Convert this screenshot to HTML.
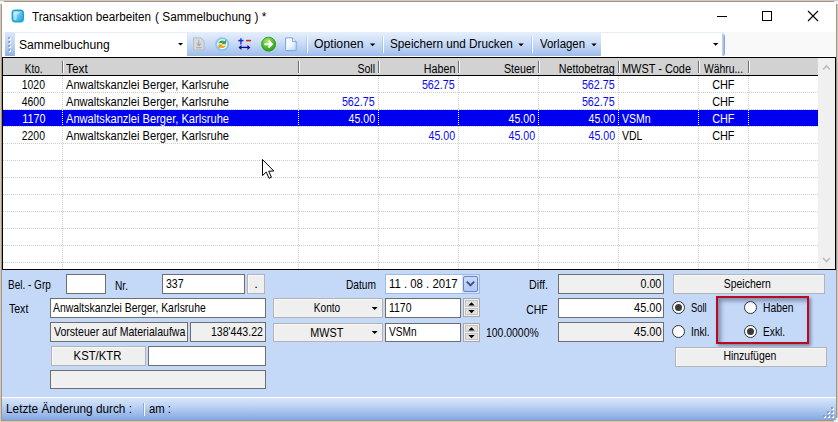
<!DOCTYPE html>
<html><head><meta charset="utf-8"><title>Transaktion bearbeiten</title>
<style>
html,body{margin:0;padding:0;}
body{width:838px;height:422px;position:relative;overflow:hidden;background:#fff;font-family:"Liberation Sans",sans-serif;}
.t{position:absolute;white-space:pre;display:block;}
</style></head><body>
<div style="position:absolute;left:0px;top:0px;width:838px;height:422px;background:#cbc7d4;"></div>
<div style="position:absolute;left:1px;top:1px;width:836px;height:420px;background:#a9976a;"></div>
<div style="position:absolute;left:2px;top:2px;width:834px;height:418px;background:#fff;"></div>
<div style="position:absolute;left:0px;top:1px;width:4px;height:3px;background:#fff;opacity:.8"></div>
<div style="position:absolute;left:834px;top:1px;width:4px;height:3px;background:#fff;opacity:.8"></div>
<div style="position:absolute;left:834px;top:418px;width:4px;height:4px;background:#fff;opacity:.8"></div>
<svg style="position:absolute;left:11px;top:9px" width="14" height="15" viewBox="0 0 14 15">
<defs><linearGradient id="ig" x1="0" y1="0" x2="1" y2="1"><stop offset="0" stop-color="#bfe8f6"/><stop offset=".45" stop-color="#6cc6ea"/><stop offset="1" stop-color="#1fa6dc"/></linearGradient></defs>
<rect x=".6" y=".6" width="12.4" height="12.8" rx="3.6" fill="#1aa2d4"/>
<rect x="2" y="2" width="9.6" height="10" rx="2.2" fill="url(#ig)"/>
<path d="M3 3 L9.5 3 L6 6 L5.4 11 L3 11 Z" fill="#fff" opacity=".45"/>
</svg>
<span class="t" style="left:32.00px;top:9.74px;font-size:12px;line-height:15px;color:#000;transform:scaleX(0.9727);transform-origin:0 0;">Transaktion bearbeiten </span>
<span class="t" style="left:155.20px;top:9.74px;font-size:12px;line-height:15px;color:#000;transform:scaleX(0.9874);transform-origin:0 0;">( Sammelbuchung ) *</span>
<svg style="position:absolute;left:700px;top:2px" width="134" height="30" viewBox="0 0 134 30" shape-rendering="crispEdges">
<rect x="17" y="14" width="10" height="1" fill="#000"/>
<rect x="62.5" y="9.5" width="9" height="9" fill="none" stroke="#000" stroke-width="1"/>
<g shape-rendering="auto" stroke="#000" stroke-width="1.1"><path d="M108 9 L118 19 M118 9 L108 19"/></g>
</svg>
<div style="position:absolute;left:2px;top:32px;width:834px;height:24px;background:#f9f9f9;"></div>
<div style="position:absolute;left:5px;top:32px;width:720px;height:24px;background:linear-gradient(#e6effc 0%,#d2e1f8 35%,#b8cff3 70%,#9cbbea 100%);border-radius:0 3px 3px 0;"></div>
<div style="position:absolute;left:5px;top:32px;width:10px;height:24px;background:linear-gradient(#dbe8fb,#b9cff2 60%,#8fb0e4);border-radius:0 0 0 3px;"></div>
<div style="position:absolute;left:9px;top:38px;width:2px;height:2px;background:#fff;"></div>
<div style="position:absolute;left:8px;top:37px;width:2px;height:2px;background:#9aa4c4;"></div>
<div style="position:absolute;left:9px;top:42px;width:2px;height:2px;background:#fff;"></div>
<div style="position:absolute;left:8px;top:41px;width:2px;height:2px;background:#9aa4c4;"></div>
<div style="position:absolute;left:9px;top:46px;width:2px;height:2px;background:#fff;"></div>
<div style="position:absolute;left:8px;top:45px;width:2px;height:2px;background:#9aa4c4;"></div>
<div style="position:absolute;left:9px;top:50px;width:2px;height:2px;background:#fff;"></div>
<div style="position:absolute;left:8px;top:49px;width:2px;height:2px;background:#9aa4c4;"></div>
<div style="position:absolute;left:15px;top:33px;width:172px;height:23px;background:#fff;"></div>
<span class="t" style="left:18.80px;top:37.94px;font-size:12px;line-height:15px;color:#000;transform:scaleX(1.0072);transform-origin:0 0;">Sammelbuchung</span>
<svg style="position:absolute;left:177px;top:42px" width="9" height="6"><polygon points="1.00,1.00 6.00,1.00 3.50,3.50" fill="#000"/></svg>
<svg style="position:absolute;left:190px;top:34px" width="112" height="20" viewBox="190 34 112 20">
<defs>
<radialGradient id="gg" cx=".42" cy=".28" r=".8"><stop offset="0" stop-color="#a8ea72"/><stop offset=".55" stop-color="#4fbb2c"/><stop offset="1" stop-color="#2a9417"/></radialGradient>
<linearGradient id="pg" x1="0" y1="0" x2=".7" y2="1"><stop offset="0" stop-color="#ffffff"/><stop offset=".55" stop-color="#f4f9ff"/><stop offset="1" stop-color="#c4dcf8"/></linearGradient>
</defs>
<!-- disabled save -->
<path d="M193.5 37.9 h7.6 l3 3 v9 h-10.6 z" fill="#d6d8dc" stroke="#b9bcc3" stroke-width="1"/>
<path d="M198.8 40.4 v4.6 M196.6 43.6 l2.2 2.2 l2.2 -2.2 M196 47.8 h5.8" stroke="#a4a8b0" stroke-width="1.1" fill="none"/>
<!-- refresh -->
<circle cx="222.2" cy="44.2" r="6" fill="#fbfdff" stroke="#86c6f0" stroke-width="2"/>
<path d="M218.8 43.2 a3.5 3 0 0 1 5.6 -1.6 l1.2 -1.1 v3.3 h-3.4 l1.1 -1.1" fill="#35a035" stroke="#35a035" stroke-width=".9"/>
<path d="M225.6 45.4 a3.5 3 0 0 1 -5.6 1.6 l-1.2 1.1 v-3.3 h3.4 l-1.1 1.1" fill="#eaa516" stroke="#eaa516" stroke-width=".9"/>
<!-- plus minus arrows -->
<path d="M238.3 40.6 h5.2" stroke="#1428d0" stroke-width="1.5"/>
<path d="M240.9 38.2 v6.4" stroke="#1428d0" stroke-width="1.3"/>
<path d="M246 40.6 h5" stroke="#e31c1c" stroke-width="1.5"/>
<path d="M240 47.4 h9" stroke="#0c0c8c" stroke-width="1.3"/>
<path d="M241.4 44.9 l-3 2.5 l3 2.5 z M247.4 44.9 l3 2.5 l-3 2.5 z" fill="#0c0c8c"/>
<!-- green go -->
<circle cx="268.6" cy="44.2" r="7" fill="url(#gg)" stroke="#2f9a1c" stroke-width=".9"/>
<path d="M264.4 44.2 h6.6 M268.4 40.8 l3.4 3.4 l-3.4 3.4" stroke="#fff" stroke-width="2.1" fill="none" stroke-linejoin="miter"/>
<!-- page -->
<path d="M285.6 37.9 h6.8 l3.8 3.8 v8.8 h-10.6 z" fill="url(#pg)" stroke="#78a8e2" stroke-width="1"/>
<path d="M292.4 37.9 v3.8 h3.8" fill="#e2eefc" stroke="#78a8e2" stroke-width="1"/>
<path d="M297 42.5 v8.6 h-10.6" stroke="#9dbbe6" stroke-width=".8" fill="none" opacity=".7"/>
</svg>
<div style="position:absolute;left:306px;top:36px;width:1px;height:17px;background:rgba(120,150,205,.28);"></div>
<div style="position:absolute;left:307px;top:36px;width:1px;height:17px;background:#fbfdff;"></div>
<span class="t" style="left:314.00px;top:37.14px;font-size:12px;line-height:15px;color:#000;transform:scaleX(1.0164);transform-origin:0 0;">Optionen</span>
<svg style="position:absolute;left:368px;top:42px" width="9" height="6"><polygon points="1.90,1.50 7.30,1.50 4.60,4.20" fill="#000"/></svg>
<div style="position:absolute;left:382px;top:36px;width:1px;height:17px;background:rgba(120,150,205,.28);"></div>
<div style="position:absolute;left:383px;top:36px;width:1px;height:17px;background:#fbfdff;"></div>
<span class="t" style="left:389.80px;top:37.14px;font-size:12px;line-height:15px;color:#000;transform:scaleX(0.9792);transform-origin:0 0;">Speichern und Drucken</span>
<svg style="position:absolute;left:517px;top:42px" width="9" height="6"><polygon points="1.30,1.50 6.70,1.50 4.00,4.20" fill="#000"/></svg>
<div style="position:absolute;left:531px;top:36px;width:1px;height:17px;background:rgba(120,150,205,.28);"></div>
<div style="position:absolute;left:532px;top:36px;width:1px;height:17px;background:#fbfdff;"></div>
<span class="t" style="left:539.60px;top:37.14px;font-size:12px;line-height:15px;color:#000;transform:scaleX(0.9499);transform-origin:0 0;">Vorlagen</span>
<svg style="position:absolute;left:590px;top:42px" width="9" height="6"><polygon points="1.30,1.50 6.70,1.50 4.00,4.20" fill="#000"/></svg>
<div style="position:absolute;left:601px;top:33px;width:121px;height:23px;background:#fff;"></div>
<svg style="position:absolute;left:712px;top:42px" width="9" height="6"><polygon points="1.00,1.00 6.40,1.00 3.70,3.70" fill="#000"/></svg>
<div style="position:absolute;left:722px;top:34px;width:3px;height:22px;background:linear-gradient(90deg,#c6d8f6,#9db9ea 60%,#7f9fd6);border-radius:0 3px 3px 0;"></div>
<div style="position:absolute;left:2px;top:57px;width:834px;height:213px;background:#000;"></div>
<div style="position:absolute;left:3px;top:58px;width:815px;height:17px;background:#d2d2d2;"></div>
<div style="position:absolute;left:3px;top:76px;width:815px;height:193px;background:#fff;"></div>
<div style="position:absolute;left:818px;top:58px;width:17px;height:211px;background:#f0f0f0;"></div>
<svg style="position:absolute;left:818px;top:58px" width="17" height="210" viewBox="0 0 17 210">
<path d="M5 11.5 L8.5 8 L12 11.5" stroke="#bdbdbd" stroke-width="1.6" fill="none"/>
<path d="M5 200 L8.5 203.5 L12 200" stroke="#bdbdbd" stroke-width="1.6" fill="none"/>
</svg>
<div style="position:absolute;left:3px;top:92px;width:815px;height:1px;background-image:linear-gradient(90deg,#cccccc 50%,transparent 50%);background-size:2px 1px;"></div>
<div style="position:absolute;left:3px;top:109px;width:815px;height:1px;background-image:linear-gradient(90deg,#cccccc 50%,transparent 50%);background-size:2px 1px;"></div>
<div style="position:absolute;left:3px;top:126px;width:815px;height:1px;background-image:linear-gradient(90deg,#cccccc 50%,transparent 50%);background-size:2px 1px;"></div>
<div style="position:absolute;left:3px;top:143px;width:815px;height:1px;background-image:linear-gradient(90deg,#cccccc 50%,transparent 50%);background-size:2px 1px;"></div>
<div style="position:absolute;left:3px;top:160px;width:815px;height:1px;background-image:linear-gradient(90deg,#cccccc 50%,transparent 50%);background-size:2px 1px;"></div>
<div style="position:absolute;left:3px;top:177px;width:815px;height:1px;background-image:linear-gradient(90deg,#cccccc 50%,transparent 50%);background-size:2px 1px;"></div>
<div style="position:absolute;left:3px;top:194px;width:815px;height:1px;background-image:linear-gradient(90deg,#cccccc 50%,transparent 50%);background-size:2px 1px;"></div>
<div style="position:absolute;left:3px;top:211px;width:815px;height:1px;background-image:linear-gradient(90deg,#cccccc 50%,transparent 50%);background-size:2px 1px;"></div>
<div style="position:absolute;left:3px;top:228px;width:815px;height:1px;background-image:linear-gradient(90deg,#cccccc 50%,transparent 50%);background-size:2px 1px;"></div>
<div style="position:absolute;left:3px;top:245px;width:815px;height:1px;background-image:linear-gradient(90deg,#cccccc 50%,transparent 50%);background-size:2px 1px;"></div>
<div style="position:absolute;left:3px;top:262px;width:815px;height:1px;background-image:linear-gradient(90deg,#cccccc 50%,transparent 50%);background-size:2px 1px;"></div>
<div style="position:absolute;left:62px;top:76px;width:1px;height:193px;background-image:linear-gradient(#cccccc 50%,transparent 50%);background-size:1px 2px;"></div>
<div style="position:absolute;left:62px;top:61px;width:1px;height:12px;background:#6e6e6e;"></div>
<div style="position:absolute;left:63px;top:61px;width:1px;height:12px;background:#fafafa;"></div>
<div style="position:absolute;left:298px;top:76px;width:1px;height:193px;background-image:linear-gradient(#cccccc 50%,transparent 50%);background-size:1px 2px;"></div>
<div style="position:absolute;left:298px;top:61px;width:1px;height:12px;background:#6e6e6e;"></div>
<div style="position:absolute;left:299px;top:61px;width:1px;height:12px;background:#fafafa;"></div>
<div style="position:absolute;left:378px;top:76px;width:1px;height:193px;background-image:linear-gradient(#cccccc 50%,transparent 50%);background-size:1px 2px;"></div>
<div style="position:absolute;left:378px;top:61px;width:1px;height:12px;background:#6e6e6e;"></div>
<div style="position:absolute;left:379px;top:61px;width:1px;height:12px;background:#fafafa;"></div>
<div style="position:absolute;left:458px;top:76px;width:1px;height:193px;background-image:linear-gradient(#cccccc 50%,transparent 50%);background-size:1px 2px;"></div>
<div style="position:absolute;left:458px;top:61px;width:1px;height:12px;background:#6e6e6e;"></div>
<div style="position:absolute;left:459px;top:61px;width:1px;height:12px;background:#fafafa;"></div>
<div style="position:absolute;left:538px;top:76px;width:1px;height:193px;background-image:linear-gradient(#cccccc 50%,transparent 50%);background-size:1px 2px;"></div>
<div style="position:absolute;left:538px;top:61px;width:1px;height:12px;background:#6e6e6e;"></div>
<div style="position:absolute;left:539px;top:61px;width:1px;height:12px;background:#fafafa;"></div>
<div style="position:absolute;left:618px;top:76px;width:1px;height:193px;background-image:linear-gradient(#cccccc 50%,transparent 50%);background-size:1px 2px;"></div>
<div style="position:absolute;left:618px;top:61px;width:1px;height:12px;background:#6e6e6e;"></div>
<div style="position:absolute;left:619px;top:61px;width:1px;height:12px;background:#fafafa;"></div>
<div style="position:absolute;left:698px;top:76px;width:1px;height:193px;background-image:linear-gradient(#cccccc 50%,transparent 50%);background-size:1px 2px;"></div>
<div style="position:absolute;left:698px;top:61px;width:1px;height:12px;background:#6e6e6e;"></div>
<div style="position:absolute;left:699px;top:61px;width:1px;height:12px;background:#fafafa;"></div>
<div style="position:absolute;left:748px;top:76px;width:1px;height:193px;background-image:linear-gradient(#cccccc 50%,transparent 50%);background-size:1px 2px;"></div>
<div style="position:absolute;left:748px;top:61px;width:1px;height:12px;background:#6e6e6e;"></div>
<div style="position:absolute;left:749px;top:61px;width:1px;height:12px;background:#fafafa;"></div>
<div style="position:absolute;left:3px;top:110px;width:815px;height:16px;background:#0000f0;"></div>
<div style="position:absolute;left:62px;top:110px;width:1px;height:16px;background-image:linear-gradient(#fff 50%,transparent 50%);background-size:1px 2px;"></div>
<div style="position:absolute;left:298px;top:110px;width:1px;height:16px;background-image:linear-gradient(#fff 50%,transparent 50%);background-size:1px 2px;"></div>
<div style="position:absolute;left:378px;top:110px;width:1px;height:16px;background-image:linear-gradient(#fff 50%,transparent 50%);background-size:1px 2px;"></div>
<div style="position:absolute;left:458px;top:110px;width:1px;height:16px;background-image:linear-gradient(#fff 50%,transparent 50%);background-size:1px 2px;"></div>
<div style="position:absolute;left:538px;top:110px;width:1px;height:16px;background-image:linear-gradient(#fff 50%,transparent 50%);background-size:1px 2px;"></div>
<div style="position:absolute;left:618px;top:110px;width:1px;height:16px;background-image:linear-gradient(#fff 50%,transparent 50%);background-size:1px 2px;"></div>
<div style="position:absolute;left:698px;top:110px;width:1px;height:16px;background-image:linear-gradient(#fff 50%,transparent 50%);background-size:1px 2px;"></div>
<div style="position:absolute;left:748px;top:110px;width:1px;height:16px;background-image:linear-gradient(#fff 50%,transparent 50%);background-size:1px 2px;"></div>
<span class="t" style="left:22.83px;top:61.94px;font-size:12px;line-height:15px;color:#000;transform:scaleX(0.8245);transform-origin:50% 0;">Kto.</span>
<span class="t" style="left:66.10px;top:61.94px;font-size:12px;line-height:15px;color:#000;transform:scaleX(0.9906);transform-origin:0 0;">Text</span>
<span class="t" style="left:355.09px;top:61.94px;font-size:12px;line-height:15px;color:#000;transform:scaleX(0.8796);transform-origin:100% 0;">Soll</span>
<span class="t" style="left:419.64px;top:61.94px;font-size:12px;line-height:15px;color:#000;transform:scaleX(0.8909);transform-origin:100% 0;">Haben</span>
<span class="t" style="left:499.64px;top:61.94px;font-size:12px;line-height:15px;color:#000;transform:scaleX(0.8881);transform-origin:100% 0;">Steuer</span>
<span class="t" style="left:552.09px;top:61.94px;font-size:12px;line-height:15px;color:#000;transform:scaleX(0.8931);transform-origin:100% 0;">Nettobetrag</span>
<span class="t" style="left:622.00px;top:61.94px;font-size:12px;line-height:15px;color:#000;transform:scaleX(0.9104);transform-origin:0 0;">MWST - Code</span>
<span class="t" style="left:704.00px;top:61.94px;font-size:12px;line-height:15px;color:#000;transform:scaleX(0.8600);transform-origin:0 0;">Währu...</span>
<span class="t" style="left:20.15px;top:78.34px;font-size:12px;line-height:15px;color:#000;transform:scaleX(0.8691);transform-origin:50% 0;">1020</span>
<span class="t" style="left:66.00px;top:78.34px;font-size:12px;line-height:15px;color:#000;transform:scaleX(0.9257);transform-origin:0 0;">Anwaltskanzlei Berger, Karlsruhe</span>
<span class="t" style="left:418.30px;top:78.34px;font-size:12px;line-height:15px;color:#0808f0;transform:scaleX(0.8937);transform-origin:100% 0;">562.75</span>
<span class="t" style="left:578.10px;top:78.34px;font-size:12px;line-height:15px;color:#0808f0;transform:scaleX(0.8937);transform-origin:100% 0;">562.75</span>
<span class="t" style="left:710.87px;top:78.34px;font-size:12px;line-height:15px;color:#000;transform:scaleX(0.9083);transform-origin:50% 0;">CHF</span>
<span class="t" style="left:20.15px;top:95.34px;font-size:12px;line-height:15px;color:#000;transform:scaleX(0.8691);transform-origin:50% 0;">4600</span>
<span class="t" style="left:66.00px;top:95.34px;font-size:12px;line-height:15px;color:#000;transform:scaleX(0.9257);transform-origin:0 0;">Anwaltskanzlei Berger, Karlsruhe</span>
<span class="t" style="left:338.30px;top:95.34px;font-size:12px;line-height:15px;color:#0808f0;transform:scaleX(0.8937);transform-origin:100% 0;">562.75</span>
<span class="t" style="left:578.10px;top:95.34px;font-size:12px;line-height:15px;color:#0808f0;transform:scaleX(0.8937);transform-origin:100% 0;">562.75</span>
<span class="t" style="left:710.87px;top:95.34px;font-size:12px;line-height:15px;color:#000;transform:scaleX(0.9083);transform-origin:50% 0;">CHF</span>
<span class="t" style="left:20.60px;top:112.34px;font-size:12px;line-height:15px;color:#fff;transform:scaleX(0.8991);transform-origin:50% 0;">1170</span>
<span class="t" style="left:66.00px;top:112.34px;font-size:12px;line-height:15px;color:#fff;transform:scaleX(0.9257);transform-origin:0 0;">Anwaltskanzlei Berger, Karlsruhe</span>
<span class="t" style="left:344.97px;top:112.34px;font-size:12px;line-height:15px;color:#fff;transform:scaleX(0.8825);transform-origin:100% 0;">45.00</span>
<span class="t" style="left:504.97px;top:112.34px;font-size:12px;line-height:15px;color:#fff;transform:scaleX(0.8825);transform-origin:100% 0;">45.00</span>
<span class="t" style="left:584.77px;top:112.34px;font-size:12px;line-height:15px;color:#fff;transform:scaleX(0.8825);transform-origin:100% 0;">45.00</span>
<span class="t" style="left:622.20px;top:112.34px;font-size:12px;line-height:15px;color:#fff;transform:scaleX(0.8752);transform-origin:0 0;">VSMn</span>
<span class="t" style="left:710.87px;top:112.34px;font-size:12px;line-height:15px;color:#fff;transform:scaleX(0.9083);transform-origin:50% 0;">CHF</span>
<span class="t" style="left:20.15px;top:129.34px;font-size:12px;line-height:15px;color:#000;transform:scaleX(0.8691);transform-origin:50% 0;">2200</span>
<span class="t" style="left:66.00px;top:129.34px;font-size:12px;line-height:15px;color:#000;transform:scaleX(0.9257);transform-origin:0 0;">Anwaltskanzlei Berger, Karlsruhe</span>
<span class="t" style="left:424.97px;top:129.34px;font-size:12px;line-height:15px;color:#0808f0;transform:scaleX(0.8825);transform-origin:100% 0;">45.00</span>
<span class="t" style="left:504.97px;top:129.34px;font-size:12px;line-height:15px;color:#0808f0;transform:scaleX(0.8825);transform-origin:100% 0;">45.00</span>
<span class="t" style="left:584.77px;top:129.34px;font-size:12px;line-height:15px;color:#0808f0;transform:scaleX(0.8825);transform-origin:100% 0;">45.00</span>
<span class="t" style="left:622.20px;top:129.34px;font-size:12px;line-height:15px;color:#000;transform:scaleX(0.8739);transform-origin:0 0;">VDL</span>
<span class="t" style="left:710.87px;top:129.34px;font-size:12px;line-height:15px;color:#000;transform:scaleX(0.9083);transform-origin:50% 0;">CHF</span>
<svg style="position:absolute;left:261px;top:158px" width="15" height="23" viewBox="0 0 15 23">
<path d="M1.50 1.50 L1.50 17.62 L5.26 14.08 L8.06 20.31 L10.42 19.24 L7.73 13.22 L12.79 13.00 Z" fill="#fff" stroke="#000" stroke-width="1"/>
</svg>
<div style="position:absolute;left:2px;top:270px;width:834px;height:127px;background:#c4d8f8;"></div>
<span class="t" style="left:7.70px;top:277.40px;font-size:13px;line-height:16px;color:#000;transform:scaleX(0.7694);transform-origin:0 0;">Bel. - Grp</span>
<div style="position:absolute;left:66px;top:274px;width:40px;height:20px;background:#fff;border:1px solid #6e6e6e;box-sizing:border-box;"></div>
<span class="t" style="left:115.00px;top:277.50px;font-size:13px;line-height:16px;color:#000;transform:scaleX(0.7825);transform-origin:0 0;">Nr.</span>
<div style="position:absolute;left:162px;top:274px;width:83px;height:20px;background:#fff;border:1px solid #6e6e6e;box-sizing:border-box;"></div>
<span class="t" style="left:166.00px;top:276.40px;font-size:13px;line-height:16px;color:#000;transform:scaleX(0.8069);transform-origin:0 0;">337</span>
<div style="position:absolute;left:247px;top:274px;width:18px;height:20px;background:#efefef;border:1px solid #b4b4b4;box-sizing:border-box;box-shadow:inset 1px 1px 0 #f8f8f8;"></div>
<span class="t" style="left:254.19px;top:276.40px;font-size:13px;line-height:16px;color:#000;">.</span>
<span class="t" style="left:345.50px;top:277.40px;font-size:13px;line-height:16px;color:#000;transform:scaleX(0.7835);transform-origin:0 0;">Datum</span>
<div style="position:absolute;left:385px;top:274px;width:95px;height:20px;background:#fff;border:1px solid #9db9e6;box-sizing:border-box;"></div>
<span class="t" style="left:388.80px;top:276.40px;font-size:13px;line-height:16px;color:#000;transform:scaleX(0.8746);transform-origin:0 0;">11 . 08 . 2017</span>
<div style="position:absolute;left:462px;top:275px;width:17px;height:18px;background:#d3e1fa;"></div>
<div style="position:absolute;left:463px;top:276px;width:15px;height:16px;background:linear-gradient(#c9dbfb,#b3c9f5);border:1px solid #6485c6;box-sizing:border-box;border-radius:2px;"></div>
<svg style="position:absolute;left:463px;top:276px" width="16" height="16" viewBox="0 0 16 16"><path d="M3.8 5.6 L7.5 9.4 L11.2 5.6" stroke="#3c5288" stroke-width="2" fill="none"/></svg>
<span class="t" style="left:524.62px;top:277.40px;font-size:13px;line-height:16px;color:#000;transform:scaleX(0.8217);transform-origin:100% 0;">Diff.</span>
<div style="position:absolute;left:558px;top:274px;width:106px;height:20px;background:#f0f0f0;border:1px solid #6e6e6e;box-sizing:border-box;"></div>
<span class="t" style="left:636.00px;top:276.40px;font-size:13px;line-height:16px;color:#000;transform:scaleX(0.8221);transform-origin:100% 0;">0.00</span>
<div style="position:absolute;left:673px;top:274px;width:152px;height:20px;background:#efefef;border:1px solid #b4b4b4;box-sizing:border-box;box-shadow:inset 1px 1px 0 #f8f8f8;"></div>
<span class="t" style="left:718.33px;top:276.40px;font-size:13px;line-height:16px;color:#000;transform:scaleX(0.8029);transform-origin:50% 0;">Speichern</span>
<span class="t" style="left:9.20px;top:300.80px;font-size:13px;line-height:16px;color:#000;transform:scaleX(0.8095);transform-origin:0 0;">Text</span>
<div style="position:absolute;left:50px;top:298px;width:216px;height:20px;background:#fff;border:1px solid #6e6e6e;box-sizing:border-box;"></div>
<span class="t" style="left:53.30px;top:299.80px;font-size:13px;line-height:16px;color:#000;transform:scaleX(0.8005);transform-origin:0 0;">Anwaltskanzlei Berger, Karlsruhe</span>
<div style="position:absolute;left:273px;top:298px;width:110px;height:20px;background:#efefef;border:1px solid #b4b4b4;box-sizing:border-box;box-shadow:inset 1px 1px 0 #f8f8f8;"></div>
<span class="t" style="left:309.71px;top:299.80px;font-size:13px;line-height:16px;color:#000;transform:scaleX(0.7801);transform-origin:50% 0;">Konto</span>
<svg style="position:absolute;left:370px;top:306px" width="10" height="7"><polygon points="1.70,1.00 7.70,1.00 4.70,4.00" fill="#000"/></svg>
<div style="position:absolute;left:385px;top:298px;width:76px;height:20px;background:#fff;border:1px solid #6e6e6e;box-sizing:border-box;"></div>
<span class="t" style="left:388.80px;top:299.80px;font-size:13px;line-height:16px;color:#000;transform:scaleX(0.8049);transform-origin:0 0;">1170</span>
<div style="position:absolute;left:463px;top:298px;width:17px;height:19px;background:#f0f0f0;border:1px solid #a8a8a8;box-sizing:border-box;"></div>
<div style="position:absolute;left:465px;top:300px;width:13px;height:7px;background:#e1e1e1;border:1px solid #c4c4c4;box-sizing:border-box;"></div>
<div style="position:absolute;left:465px;top:308px;width:13px;height:7px;background:#e1e1e1;border:1px solid #c4c4c4;box-sizing:border-box;"></div>
<svg style="position:absolute;left:463px;top:298px" width="17" height="19" viewBox="0 0 17 19"><polygon points="5.3,7.5 11.7,7.5 8.5,4.3" fill="#000"/><polygon points="5.3,12 11.7,12 8.5,15.2" fill="#000"/></svg>
<span class="t" style="left:520.78px;top:301.80px;font-size:13px;line-height:16px;color:#000;transform:scaleX(0.8048);transform-origin:100% 0;">CHF</span>
<div style="position:absolute;left:558px;top:298px;width:106px;height:20px;background:#fff;border:1px solid #6e6e6e;box-sizing:border-box;"></div>
<span class="t" style="left:628.77px;top:299.80px;font-size:13px;line-height:16px;color:#000;transform:scaleX(0.8453);transform-origin:100% 0;">45.00</span>
<div style="position:absolute;left:672.0px;top:300.9px;width:13px;height:13px;background:#fff;border:1px solid #333;box-sizing:border-box;border-radius:50%;"></div>
<div style="position:absolute;left:675.0px;top:303.9px;width:7px;height:7px;background:#3a3a3a;border-radius:50%;"></div>
<span class="t" style="left:691.40px;top:299.80px;font-size:13px;line-height:16px;color:#000;transform:scaleX(0.7197);transform-origin:0 0;">Soll</span>
<div style="position:absolute;left:743.9px;top:300.9px;width:13px;height:13px;background:#fff;border:1px solid #333;box-sizing:border-box;border-radius:50%;"></div>
<span class="t" style="left:763.40px;top:299.80px;font-size:13px;line-height:16px;color:#000;transform:scaleX(0.7936);transform-origin:0 0;">Haben</span>
<div style="position:absolute;left:50px;top:322px;width:138px;height:20px;background:#f0f0f0;border:1px solid #6e6e6e;box-sizing:border-box;"></div>
<span class="t" style="left:53.50px;top:324.20px;font-size:13px;line-height:16px;color:#000;transform:scaleX(0.8112);transform-origin:0 0;">Vorsteuer auf Materialaufwa</span>
<div style="position:absolute;left:190px;top:322px;width:76px;height:20px;background:#f0f0f0;border:1px solid #6e6e6e;box-sizing:border-box;"></div>
<span class="t" style="left:199.07px;top:324.20px;font-size:13px;line-height:16px;color:#000;transform:scaleX(0.8134);transform-origin:100% 0;">138'443.22</span>
<div style="position:absolute;left:273px;top:323px;width:110px;height:19px;background:#efefef;border:1px solid #b4b4b4;box-sizing:border-box;box-shadow:inset 1px 1px 0 #f8f8f8;"></div>
<span class="t" style="left:306.94px;top:325.20px;font-size:13px;line-height:16px;color:#000;transform:scaleX(0.8310);transform-origin:50% 0;">MWST</span>
<svg style="position:absolute;left:370px;top:330px" width="10" height="7"><polygon points="1.70,1.00 7.70,1.00 4.70,4.00" fill="#000"/></svg>
<div style="position:absolute;left:385px;top:323px;width:76px;height:19px;background:#fff;border:1px solid #6e6e6e;box-sizing:border-box;"></div>
<span class="t" style="left:388.80px;top:324.20px;font-size:13px;line-height:16px;color:#000;transform:scaleX(0.7768);transform-origin:0 0;">VSMn</span>
<div style="position:absolute;left:463px;top:323px;width:17px;height:19px;background:#f0f0f0;border:1px solid #a8a8a8;box-sizing:border-box;"></div>
<div style="position:absolute;left:465px;top:325px;width:13px;height:7px;background:#e1e1e1;border:1px solid #c4c4c4;box-sizing:border-box;"></div>
<div style="position:absolute;left:465px;top:333px;width:13px;height:7px;background:#e1e1e1;border:1px solid #c4c4c4;box-sizing:border-box;"></div>
<svg style="position:absolute;left:463px;top:323px" width="17" height="19" viewBox="0 0 17 19"><polygon points="5.3,7.5 11.7,7.5 8.5,4.3" fill="#000"/><polygon points="5.3,12 11.7,12 8.5,15.2" fill="#000"/></svg>
<span class="t" style="left:486.00px;top:325.40px;font-size:13px;line-height:16px;color:#000;transform:scaleX(0.8012);transform-origin:0 0;">100.0000%</span>
<div style="position:absolute;left:558px;top:322px;width:106px;height:20px;background:#f0f0f0;border:1px solid #6e6e6e;box-sizing:border-box;"></div>
<span class="t" style="left:628.77px;top:324.20px;font-size:13px;line-height:16px;color:#000;transform:scaleX(0.8453);transform-origin:100% 0;">45.00</span>
<div style="position:absolute;left:672.0px;top:325.3px;width:13px;height:13px;background:#fff;border:1px solid #333;box-sizing:border-box;border-radius:50%;"></div>
<span class="t" style="left:691.40px;top:324.20px;font-size:13px;line-height:16px;color:#000;transform:scaleX(0.7801);transform-origin:0 0;">Inkl.</span>
<div style="position:absolute;left:743.9px;top:325.3px;width:13px;height:13px;background:#fff;border:1px solid #333;box-sizing:border-box;border-radius:50%;"></div>
<div style="position:absolute;left:746.9px;top:328.3px;width:7px;height:7px;background:#3a3a3a;border-radius:50%;"></div>
<span class="t" style="left:763.40px;top:324.20px;font-size:13px;line-height:16px;color:#000;transform:scaleX(0.7845);transform-origin:0 0;">Exkl.</span>
<div style="position:absolute;left:716px;top:296px;width:93px;height:48px;border:2px solid #bb0a1c;box-sizing:border-box;box-shadow:2px 2px 3px rgba(60,70,105,.55), inset 3px 3px 4px rgba(60,70,105,.5);"></div>
<div style="position:absolute;left:51px;top:346px;width:95px;height:20px;background:#efefef;border:1px solid #b4b4b4;box-sizing:border-box;box-shadow:inset 1px 1px 0 #f8f8f8;"></div>
<span class="t" style="left:70.45px;top:348.00px;font-size:13px;line-height:16px;color:#000;transform:scaleX(0.8690);transform-origin:50% 0;">KST/KTR</span>
<div style="position:absolute;left:148px;top:346px;width:118px;height:20px;background:#fff;border:1px solid #6e6e6e;box-sizing:border-box;"></div>
<div style="position:absolute;left:675px;top:347px;width:152px;height:20px;background:#efefef;border:1px solid #b4b4b4;box-sizing:border-box;box-shadow:inset 1px 1px 0 #f8f8f8;"></div>
<span class="t" style="left:716.82px;top:348.40px;font-size:13px;line-height:16px;color:#000;transform:scaleX(0.8044);transform-origin:50% 0;">Hinzufügen</span>
<div style="position:absolute;left:50px;top:370px;width:216px;height:19px;background:#f0f0f0;border:1px solid #6e6e6e;box-sizing:border-box;"></div>
<div style="position:absolute;left:2px;top:397px;width:834px;height:23px;background:linear-gradient(#eaf2fd 0%,#d3e3f9 8%,#bdd2f4 40%,#9bbaea 75%,#82a8e4 100%);"></div>
<div style="position:absolute;left:2px;top:397px;width:834px;height:1px;background:#fff;"></div>
<span class="t" style="left:6.00px;top:401.84px;font-size:12px;line-height:15px;color:#000;transform:scaleX(0.9837);transform-origin:0 0;">Letzte Änderung durch :</span>
<div style="position:absolute;left:143px;top:403px;width:1px;height:13px;background:#8fa9d6;"></div>
<div style="position:absolute;left:144px;top:403px;width:1px;height:13px;background:#f4f8fe;"></div>
<span class="t" style="left:149.00px;top:401.84px;font-size:12px;line-height:15px;color:#000;transform:scaleX(0.9426);transform-origin:0 0;">am :</span>
<div style="position:absolute;left:832px;top:408px;width:2px;height:2px;background:#fff;"></div>
<div style="position:absolute;left:831px;top:407px;width:2px;height:2px;background:#8c9bb8;"></div>
<div style="position:absolute;left:828px;top:412px;width:2px;height:2px;background:#fff;"></div>
<div style="position:absolute;left:827px;top:411px;width:2px;height:2px;background:#8c9bb8;"></div>
<div style="position:absolute;left:832px;top:412px;width:2px;height:2px;background:#fff;"></div>
<div style="position:absolute;left:831px;top:411px;width:2px;height:2px;background:#8c9bb8;"></div>
<div style="position:absolute;left:824px;top:416px;width:2px;height:2px;background:#fff;"></div>
<div style="position:absolute;left:823px;top:415px;width:2px;height:2px;background:#8c9bb8;"></div>
<div style="position:absolute;left:828px;top:416px;width:2px;height:2px;background:#fff;"></div>
<div style="position:absolute;left:827px;top:415px;width:2px;height:2px;background:#8c9bb8;"></div>
<div style="position:absolute;left:832px;top:416px;width:2px;height:2px;background:#fff;"></div>
<div style="position:absolute;left:831px;top:415px;width:2px;height:2px;background:#8c9bb8;"></div>
</body></html>
